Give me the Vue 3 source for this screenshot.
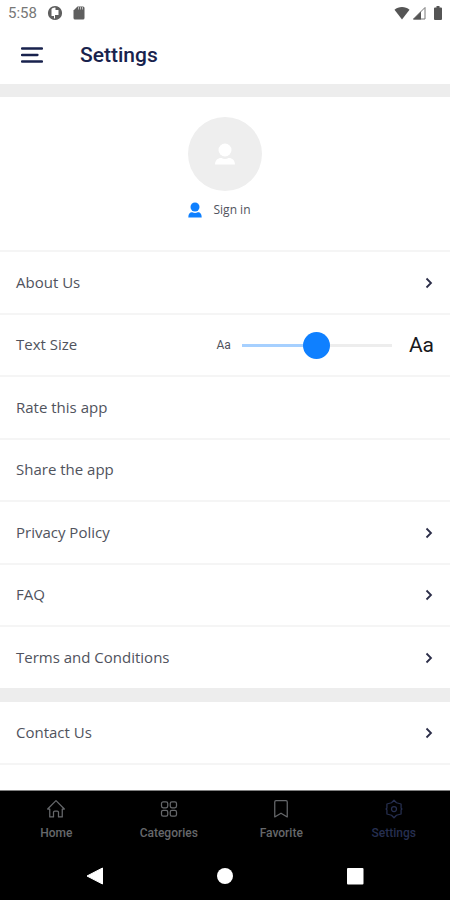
<script setup>
import { ref } from 'vue'

const textSize = ref(50)

const general = [
  { label: 'About Us', arrow: true },
  { label: 'Text Size', slider: true },
  { label: 'Rate this app' },
  { label: 'Share the app' },
  { label: 'Privacy Policy', arrow: true },
  { label: 'FAQ', arrow: true },
  { label: 'Terms and Conditions', arrow: true },
]
const support = [{ label: 'Contact Us', arrow: true }]

const tabs = [
  { label: 'Home', d: ['M2 12 12 2l10 10h-2.500v9.500h-4.500V16a1.500 1.500 0 0 0-1.500-1.500h-3A1.500 1.500 0 0 0 9 16v5.500H4.500V12z'] },
  {
    label: 'Categories',
    d: [
      'M5 3.500h3.500a2 2 0 0 1 2 2v3a2 2 0 0 1-2 2H5a2 2 0 0 1-2-2v-3a2 2 0 0 1 2-2z',
      'M15.500 3.500H19a2 2 0 0 1 2 2v3a2 2 0 0 1-2 2h-3.500a2 2 0 0 1-2-2v-3a2 2 0 0 1 2-2z',
      'M5 13.500h3.500a2 2 0 0 1 2 2v3a2 2 0 0 1-2 2H5a2 2 0 0 1-2-2v-3a2 2 0 0 1 2-2z',
      'M15.500 13.500H19a2 2 0 0 1 2 2v3a2 2 0 0 1-2 2h-3.500a2 2 0 0 1-2-2v-3a2 2 0 0 1 2-2z',
    ],
  },
  { label: 'Favorite', d: ['M6 2h12a1.500 1.500 0 0 1 1.500 1.500V21.500L12 17l-7.500 4.500V3.500A1.500 1.500 0 0 1 6 2z'] },
  {
    label: 'Settings',
    active: true,
    d: [
      'M12 1.500 15 4.500 20.500 6v5l1 1-1 1v5L15 19.500 12 22.500 9 19.500 3.500 18v-5l-1-1 1-1V6L9 4.500z',
      'M12 9a3 3 0 1 1 0 6 3 3 0 0 1 0-6z',
    ],
  },
]
</script>

<template>
  <div class="app">
    <div class="status">
      <div class="status-side">
        <span class="clock">5:58</span>
        <svg width="16" height="16" viewBox="0 0 16 16">
          <circle cx="8" cy="8" r="6.300" fill="#fff" stroke="#5f5f5f" stroke-width="1.600" />
          <path d="M1.500 8A6.500 6.500 0 0 1 4.500 2.500V11H7v3.500A6.500 6.500 0 0 1 1.500 8z" fill="#5f5f5f" />
          <path d="M8.500 1.500A6.500 6.500 0 0 1 14.500 8 6.500 6.500 0 0 1 8 14.500V10h3.500V5h-3z" fill="#5f5f5f" />
        </svg>
        <svg width="12" height="16" viewBox="0 0 12 16">
          <path d="M4.500 1.500H10a1.500 1.500 0 0 1 1.500 1.500v10a1.500 1.500 0 0 1-1.500 1.500H2A1.500 1.500 0 0 1 .500 13V5.500z" fill="#5f5f5f" />
          <path d="M5.500 2v2.500M7.500 2v2.500M9.500 2v2.500" stroke="#bbb" />
        </svg>
      </div>
      <div class="status-side right">
        <svg width="16" height="14" viewBox="0 0 16 14">
          <path d="M8 13.500.500 3.700C4.500.200 11.500.200 15.500 3.700z" fill="#555" />
        </svg>
        <svg width="14" height="14" viewBox="0 0 14 14">
          <path d="M1.500 13 13 1.500V13z" fill="none" stroke="#777" />
          <path d="M1 13.500 9 5.500v8z" fill="#555" />
        </svg>
        <svg class="battery" width="8" height="14" viewBox="0 0 8 14">
          <path d="M2.500 0h3v1.500H7a1 1 0 0 1 1 1V13a1 1 0 0 1-1 1H1a1 1 0 0 1-1-1V2.500a1 1 0 0 1 1-1h1.500z" fill="#555" />
        </svg>
      </div>
    </div>

    <header class="header">
      <button class="menu" type="button" aria-label="Menu">
        <svg width="22" height="18" viewBox="0 0 22 18">
          <path d="M1 2.500h20M1 9h15.500M1 15.500h20" stroke="#18224d" stroke-width="2.300" stroke-linecap="round" />
        </svg>
      </button>
      <h1 class="title">Settings</h1>
    </header>

    <main class="content">
      <section class="profile">
        <div class="avatar">
          <svg width="20" height="22" viewBox="0 0 20 22">
            <circle cx="10" cy="7" r="6.500" fill="#fff" />
            <path d="M0 21.500c0-5 4-7 6.500-6.500 2 1.300 5 1.300 7 0 2.500-.500 6.500 1.500 6.500 6.500z" fill="#fff" />
          </svg>
        </div>
        <a class="signin" href="#">
          <svg width="14" height="16" viewBox="0 0 14 16">
            <circle cx="7" cy="5" r="4.500" fill="#0f80ff" />
            <path d="M.300 15.500c0-4 2-5.500 4-5.200 1.500 1 4 1 5.400 0 2-.300 4 1.200 4 5.200z" fill="#0f80ff" />
          </svg>
          <span>Sign in</span>
        </a>
      </section>

      <ul v-for="(group, g) in [general, support]" :key="g" class="group">
        <li v-for="row in group" :key="row.label" class="item">
          <div v-if="row.slider" class="row">
            <label class="label" for="text-size">{{ row.label }}</label>
            <div class="sizer">
              <span class="small-a">Aa</span>
              <input
                id="text-size"
                v-model="textSize"
                class="range"
                type="range"
                min="0"
                max="100"
                :style="{ '--fill': textSize + '%' }"
              />
              <span class="large-a">Aa</span>
            </div>
          </div>
          <a v-else class="row" href="#">
            <span class="label">{{ row.label }}</span>
            <svg v-if="row.arrow" class="arrow" width="8" height="12" viewBox="0 0 8 12">
              <path d="M1.500 1.500 6 6l-4.500 4.500" fill="none" stroke="#2b2d48" stroke-width="1.800" />
            </svg>
          </a>
        </li>
      </ul>
    </main>

    <footer class="footer">
      <nav class="tabs">
        <a v-for="tab in tabs" :key="tab.label" href="#" class="tab" :class="{ active: tab.active }">
          <svg width="20" height="20" viewBox="0 0 24 24" fill="none" stroke="currentColor" stroke-width="1.500" stroke-linejoin="round" stroke-linecap="round">
            <path v-for="d in tab.d" :key="d" :d="d" />
          </svg>
          <span>{{ tab.label }}</span>
        </a>
      </nav>
      <div class="system">
        <button type="button" aria-label="Back">
          <svg width="18" height="18" viewBox="0 0 18 18"><path d="M1 9 16.500 1v16z" fill="#fff" stroke="#fff" stroke-linejoin="round" /></svg>
        </button>
        <button type="button" aria-label="Home">
          <svg width="18" height="18" viewBox="0 0 18 18"><circle cx="9" cy="9" r="8" fill="#fff" /></svg>
        </button>
        <button type="button" aria-label="Recent apps">
          <svg width="18" height="18" viewBox="0 0 18 18"><rect x="1" y="1" width="16.500" height="16.500" rx="1" fill="#fff" /></svg>
        </button>
      </div>
    </footer>
  </div>
</template>

<style>
body {
  margin: 0;
  background: #fff;
}
</style>

<style scoped>
.app {
  display: flex;
  flex-direction: column;
  min-height: 100vh;
  background: #fff;
  color: #50535d;
  font-family: 'Open Sans', 'Noto Sans', sans-serif;
  font-size: 15px;
}
svg {
  display: block;
  flex: none;
}
a {
  color: inherit;
  text-decoration: none;
}
button {
  padding: 0;
  border: 0;
  background: none;
}
.status {
  display: flex;
  justify-content: space-between;
  align-items: center;
  height: 26px;
  padding: 0 8px;
}
.status-side {
  display: flex;
  align-items: center;
  gap: 10px;
}
.status-side.right {
  gap: 2px;
}
.battery {
  margin-left: 6px;
}
.clock {
  color: #777;
  font-family: Roboto, sans-serif;
  font-size: 15px;
}
.header {
  display: flex;
  align-items: center;
  gap: 37px;
  height: 58px;
  padding: 0 21px;
  border-bottom: 13px solid #ededed;
}
.title {
  margin: 0;
  color: #18224d;
  font-family: Roboto, sans-serif;
  font-size: 21px;
  font-weight: 500;
}
.content {
  flex: 1;
}
.profile {
  display: flex;
  flex-direction: column;
  align-items: center;
  gap: 9px;
  height: 133px;
  padding-top: 20px;
  border-bottom: 2px solid #f5f5f5;
}
.avatar {
  display: flex;
  align-items: center;
  justify-content: center;
  width: 74px;
  height: 74px;
  border-radius: 50%;
  background: #eee;
}
.signin {
  display: flex;
  align-items: center;
  gap: 12px;
  padding-right: 12px;
  font-size: 12px;
  line-height: 20px;
}
.group {
  margin: 0;
  padding: 0;
  list-style: none;
}
.group + .group {
  border-top: 14px solid #ededed;
}
.item {
  box-sizing: border-box;
  height: 63px;
  border-bottom: 2px solid #f5f5f5;
}
.item:nth-child(even) {
  height: 62px;
}
.group:not(:last-child) .item:last-child {
  height: 61px;
  border-bottom: 0;
}
.row {
  display: flex;
  align-items: center;
  justify-content: space-between;
  height: 100%;
  padding: 0 16px;
}
.label {
  padding-bottom: 2px;
}
.arrow {
  margin-right: 1px;
}
.sizer {
  display: flex;
  align-items: center;
  font-family: Roboto, sans-serif;
}
.small-a {
  font-size: 12px;
}
.large-a {
  color: #18191c;
  font-size: 21px;
}
.range {
  appearance: none;
  width: 150px;
  height: 28px;
  margin: 0 17px 0 11px;
  background: linear-gradient(to right, #a6d0ff var(--fill), #ededed var(--fill)) center / 100% 3px no-repeat;
}
.range::-webkit-slider-thumb {
  appearance: none;
  width: 27px;
  height: 27px;
  border-radius: 50%;
  background: #0f80ff;
}
.footer {
  border-top: 1px solid #808080;
  background: #000;
}
.tabs {
  display: grid;
  grid-template-columns: repeat(4, 1fr);
  height: 60px;
}
.tab {
  display: flex;
  flex-direction: column;
  align-items: center;
  gap: 6px;
  padding-top: 8px;
  color: #66686b;
  font-family: Roboto, sans-serif;
  font-size: 12px;
  font-weight: 500;
  line-height: 16px;
}
.tab.active {
  color: #262f50;
}
.system {
  display: flex;
  align-items: center;
  justify-content: space-around;
  height: 49px;
  padding: 0 30px;
}
</style>
